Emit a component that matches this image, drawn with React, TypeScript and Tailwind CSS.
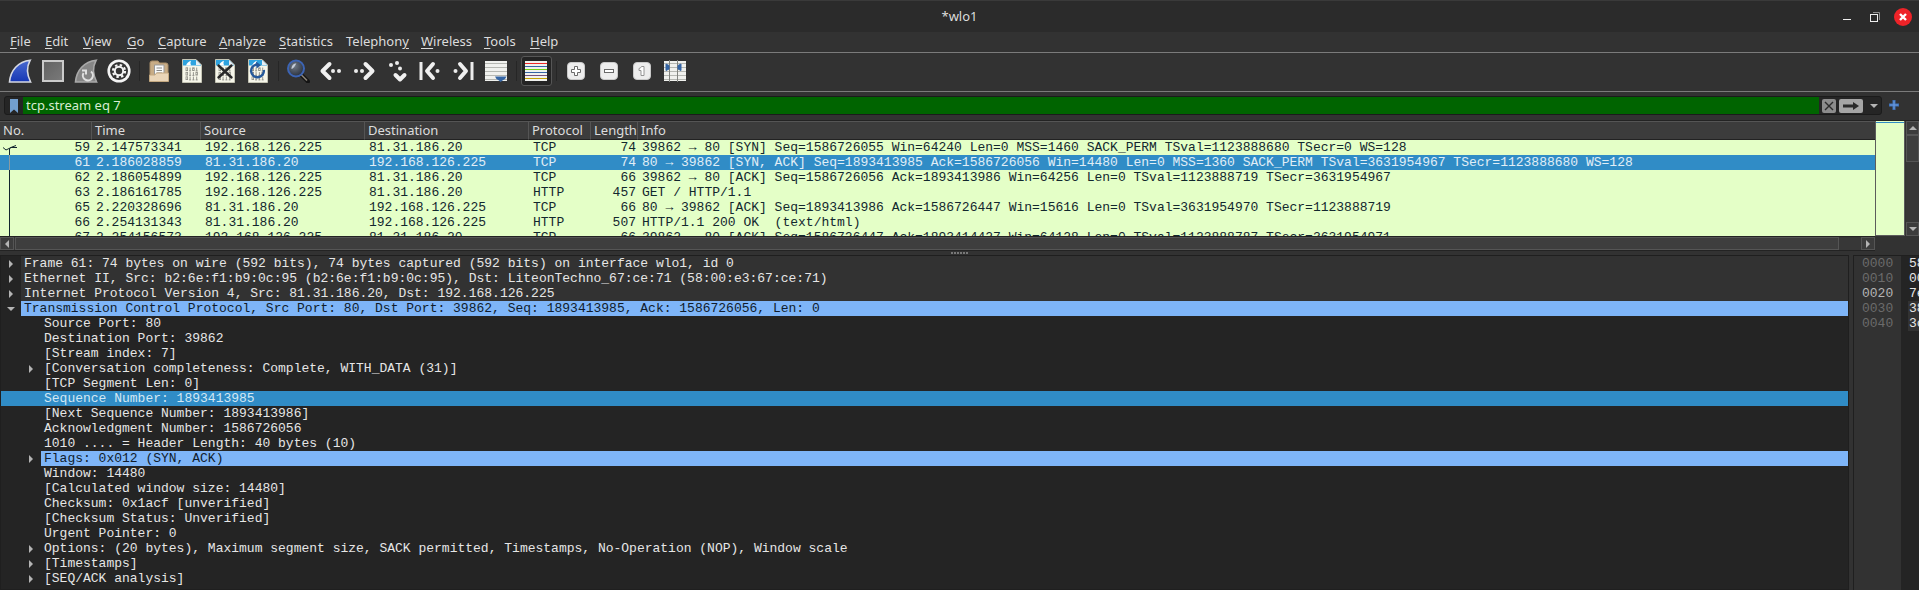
import React from "react";

const ui = "font-['Noto_Sans','Open_Sans',sans-serif]";
const mono = "font-['Liberation_Mono',monospace]";

type Packet = [string, string, string, string, string, string, string];
const A = "192.168.126.225";
const B = "81.31.186.20";
const packets: Packet[] = [
  ["59", "2.147573341", A, B, "TCP", "74", "39862 → 80 [SYN] Seq=1586726055 Win=64240 Len=0 MSS=1460 SACK_PERM TSval=1123888680 TSecr=0 WS=128"],
  ["61", "2.186028859", B, A, "TCP", "74", "80 → 39862 [SYN, ACK] Seq=1893413985 Ack=1586726056 Win=14480 Len=0 MSS=1360 SACK_PERM TSval=3631954967 TSecr=1123888680 WS=128"],
  ["62", "2.186054899", A, B, "TCP", "66", "39862 → 80 [ACK] Seq=1586726056 Ack=1893413986 Win=64256 Len=0 TSval=1123888719 TSecr=3631954967"],
  ["63", "2.186161785", A, B, "HTTP", "457", "GET / HTTP/1.1"],
  ["65", "2.220328696", B, A, "TCP", "66", "80 → 39862 [ACK] Seq=1893413986 Ack=1586726447 Win=15616 Len=0 TSval=3631954970 TSecr=1123888719"],
  ["66", "2.254131343", B, A, "HTTP", "507", "HTTP/1.1 200 OK  (text/html)"],
  ["67", "2.254156573", A, B, "TCP", "66", "39862 → 80 [ACK] Seq=1586726447 Ack=1893414427 Win=64128 Len=0 TSval=1123888787 TSecr=3631954971"],
];

type Detail = { text: string; depth: 0 | 1; arrow?: "right" | "down"; tone?: "proto" | "mark" | "sel" };
const details: Detail[] = [
  { text: "Frame 61: 74 bytes on wire (592 bits), 74 bytes captured (592 bits) on interface wlo1, id 0", depth: 0, arrow: "right", tone: "proto" },
  { text: "Ethernet II, Src: b2:6e:f1:b9:0c:95 (b2:6e:f1:b9:0c:95), Dst: LiteonTechno_67:ce:71 (58:00:e3:67:ce:71)", depth: 0, arrow: "right", tone: "proto" },
  { text: "Internet Protocol Version 4, Src: 81.31.186.20, Dst: 192.168.126.225", depth: 0, arrow: "right", tone: "proto" },
  { text: "Transmission Control Protocol, Src Port: 80, Dst Port: 39862, Seq: 1893413985, Ack: 1586726056, Len: 0", depth: 0, arrow: "down", tone: "mark" },
  { text: "Source Port: 80", depth: 1 },
  { text: "Destination Port: 39862", depth: 1 },
  { text: "[Stream index: 7]", depth: 1 },
  { text: "[Conversation completeness: Complete, WITH_DATA (31)]", depth: 1, arrow: "right" },
  { text: "[TCP Segment Len: 0]", depth: 1 },
  { text: "Sequence Number: 1893413985", depth: 1, tone: "sel" },
  { text: "[Next Sequence Number: 1893413986]", depth: 1 },
  { text: "Acknowledgment Number: 1586726056", depth: 1 },
  { text: "1010 .... = Header Length: 40 bytes (10)", depth: 1 },
  { text: "Flags: 0x012 (SYN, ACK)", depth: 1, arrow: "right", tone: "mark" },
  { text: "Window: 14480", depth: 1 },
  { text: "[Calculated window size: 14480]", depth: 1 },
  { text: "Checksum: 0x1acf [unverified]", depth: 1 },
  { text: "[Checksum Status: Unverified]", depth: 1 },
  { text: "Urgent Pointer: 0", depth: 1 },
  { text: "Options: (20 bytes), Maximum segment size, SACK permitted, Timestamps, No-Operation (NOP), Window scale", depth: 1, arrow: "right" },
  { text: "[Timestamps]", depth: 1, arrow: "right" },
  { text: "[SEQ/ACK analysis]", depth: 1, arrow: "right" },
];

/* Menu entries: text before the mnemonic, the mnemonic, text after it, width */
const menus: [string, string, string, string][] = [
  ["", "F", "ile", "w-[35px]"],
  ["", "E", "dit", "w-[38px]"],
  ["", "V", "iew", "w-11"],
  ["", "G", "o", "w-[31px]"],
  ["", "C", "apture", "w-[61px]"],
  ["", "A", "nalyze", "w-[60px]"],
  ["", "S", "tatistics", "w-[67px]"],
  ["Telephon", "y", "", "w-[75px]"],
  ["", "W", "ireless", "w-[63px]"],
  ["", "T", "ools", "w-[46px]"],
  ["", "H", "elp", "w-11"],
];

function Svg({ size = 24, children }: { size?: number; children: React.ReactNode }) {
  return (
    <svg width={size} height={size} viewBox={`0 0 ${size} ${size}`} aria-hidden="true">
      {children}
    </svg>
  );
}

function Fin({ fill, edge, inner }: { fill: string; edge: string; inner?: React.ReactNode }) {
  return (
    <Svg>
      <path d="M1.5 23 C2.5 11.5 10 2.5 22.2 1.2 C18.5 8 19 16 22.6 23 Z" fill={fill} stroke={edge} strokeWidth="1.6" />
      {inner}
    </Svg>
  );
}

function Sheet({ children }: { children?: React.ReactNode }) {
  const rows: [number, string][] = [[12, "0101"], [16.5, "0110"], [21, "0111"]];
  return (
    <Svg>
      <path d="M2.5 0.5H16L21.5 6V23.5H2.5Z" fill="#f6f6ea" stroke="#c5c5b5" />
      <path d="M3 1H16L21 6V6.5H3Z" fill="#2ea3df" />
      <path d="M6 6.5C7 4 8.5 2.5 11 1.8C10.3 3.5 10.3 5 11.2 6.5Z" fill="#fff" />
      <path d="M16 1V6H21Z" fill="#e8eef2" />
      {rows.map(([y, bits]) =>
        bits.split("").map((b, i) =>
          b === "0" ? (
            <rect key={`${y}${i}`} x={6 + i * 3.3} y={y - 3.2} width="1.6" height="2.8" fill="none" stroke="#8b8b84" strokeWidth="0.8" />
          ) : (
            <path key={`${y}${i}`} d={`M${6.8 + i * 3.3} ${y - 3.4}v3.3m-1 0h2`} stroke="#8b8b84" strokeWidth="0.9" />
          )
        )
      )}
      {children}
    </Svg>
  );
}

const dot = (x: number, y: number) => <circle key={`${x}-${y}`} cx={x} cy={y} r="2" fill="#ececec" />;
const chevron = { fill: "none", stroke: "#f0f0f0", strokeWidth: 4, strokeLinejoin: "round", strokeLinecap: "round" } as const;
const LINES = [3.5, 7.5, 11.5, 15.5, 19.5];

function KeyCap({ children }: { children: React.ReactNode }) {
  return (
    <Svg>
      <rect x="3.5" y="3.5" width="17" height="17" rx="3.5" fill="#ededed" stroke="#c9c9c9" />
      {children}
    </Svg>
  );
}

const icons: Record<string, React.ReactNode> = {
  start: <Fin fill="url(#finBlue)" edge="#d6d9e2" inner={
    <defs><linearGradient id="finBlue" x1="0" y1="0" x2="0" y2="1"><stop offset="0" stopColor="#4a6bd0" /><stop offset="1" stopColor="#1737b4" /></linearGradient></defs>
  } />,
  stop: (
    <Svg>
      <defs><linearGradient id="stopGrey" x1="0" y1="0" x2="1" y2="1"><stop offset="0" stopColor="#626262" /><stop offset="1" stopColor="#7a7a7a" /></linearGradient></defs>
      <rect x="2" y="2" width="20" height="20" fill="url(#stopGrey)" stroke="#cbcbcb" strokeWidth="2" />
    </Svg>
  ),
  restart: <Fin fill="#868686" edge="#a9a9a9" inner={
    <g fill="none" stroke="#e0e0e0" strokeWidth="2"><path d="M17 12.5a5 5 0 1 1 -7.5 1.5" /><path d="M8 11.5h4v4" /></g>
  } />,
  options: (
    <Svg>
      <circle cx="12" cy="12" r="11.6" fill="#f4f4f4" />
      <circle cx="12" cy="12" r="9" fill="#343434" />
      <circle cx="12" cy="12" r="4.2" fill="none" stroke="#f4f4f4" strokeWidth="2" />
      <circle cx="12" cy="12" r="6" fill="none" stroke="#f4f4f4" strokeWidth="2.2" strokeDasharray="2.4 2.31" />
    </Svg>
  ),
  open: (
    <Svg>
      <path d="M3 20V4q0-2 2-2h6l1.5 2H19q2 0 2 2v14Z" fill="#c8ac86" stroke="#a78c68" />
      <path d="M7.5 6h9.500v11h-9.500z" fill="#fafafa" stroke="#999" />
      <path d="M9.500 9h5.500M9.500 11.500h5.500M9.500 14h5.500" stroke="#888" />
      <path d="M2.500 16H8l1.500-2H21.500V22.500H2.500Z" fill="#ead5b8" stroke="#c4a981" />
    </Svg>
  ),
  save: <Sheet />,
  close: <Sheet><path d="M5.500 6.500L18.500 18.500M18.500 6.500L5.500 18.500" stroke="#282828" strokeWidth="2.4" strokeLinecap="round" /></Sheet>,
  reload: <Sheet><path d="M11 5.500A6.400 6.400 0 1 0 17.800 11" fill="none" stroke="#24589b" strokeWidth="2.400" /><path d="M10 2.500L15 6.200L10.500 9.500Z" fill="#24589b" /></Sheet>,
  find: (
    <Svg>
      <defs><radialGradient id="lens" cx="0.4" cy="0.35" r="0.7"><stop offset="0" stopColor="#6f7884" /><stop offset="1" stopColor="#252c3a" /></radialGradient></defs>
      <path d="M15.500 16L22 22.500" stroke="#141414" strokeWidth="4" strokeLinecap="round" />
      <path d="M15 15.500L21 21.500" stroke="#8a8378" strokeWidth="1.600" />
      <circle cx="10" cy="9.500" r="8" fill="url(#lens)" stroke="#3c64b4" strokeWidth="2" />
      <path d="M5.500 10C5.500 6.500 7.500 4.500 10.500 4.500C9 6 9 8.500 5.500 10Z" fill="#c4ccd8" />
    </Svg>
  ),
  back: <Svg><path d="M10.500 5L3.500 12L10.500 19" {...chevron} />{[dot(14, 12), dot(20, 12)]}</Svg>,
  forward: <Svg><path d="M13.500 5L20.500 12L13.500 19" {...chevron} />{[dot(4, 12), dot(10, 12)]}</Svg>,
  goto: <Svg><path d="M10.500 16L15 20.500L19.500 16" {...chevron} />{[dot(6, 6), dot(12, 4), dot(15, 9.500)]}</Svg>,
  first: <Svg><path d="M3 3V21" stroke="#ececec" strokeWidth="3" /><path d="M15 5L9 12L15 19" {...chevron} />{dot(19.500, 12)}</Svg>,
  last: <Svg><path d="M21 3V21" stroke="#ececec" strokeWidth="3" /><path d="M9 5L15 12L9 19" {...chevron} />{dot(4.500, 12)}</Svg>,
  scroll: (
    <Svg>
      <rect x="1" y="2" width="22" height="20" fill="#f0f1ee" />
      {LINES.map((y) => <path key={y} d={`M1 ${y + 1}H23`} stroke="#b5b7b2" />)}
      <path d="M11 17.500H22.500Q21.500 20.500 18.500 21.500L16.700 23L15 21.500Q12 20.500 11 17.500Z" fill="#3465a4" />
    </Svg>
  ),
  colorize: (
    <Svg>
      <rect x="1" y="2" width="22" height="20" fill="#f0f1ee" />
      {["#ef2929", "#3465a4", "#73d216", "#3465a4", "#75507b", "#c4a000"].map((c, i) => (
        <path key={i} d={`M1 ${4.5 + i * 3}H23`} stroke={c} />
      ))}
    </Svg>
  ),
  zoomIn: <KeyCap><path d="M10.500 7.500h3v3h3v3h-3v3h-3v-3h-3v-3h3z" fill="#fff" stroke="#6a6a6a" /></KeyCap>,
  zoomOut: <KeyCap><rect x="7.500" y="10.500" width="9" height="3" fill="#fff" stroke="#6a6a6a" /></KeyCap>,
  zoomReset: <KeyCap><path d="M11 16.500V11.500H9V9.500Q11 9 11.500 7.500H14V16.500Z" fill="#fff" stroke="#8a8a8a" strokeWidth="0.9" /></KeyCap>,
  columns: (
    <Svg>
      <rect x="1" y="2" width="22" height="20" fill="#f0f1ee" />
      {LINES.map((y) => <path key={y} d={`M1 ${y + 1}H23`} stroke="#b5b7b2" />)}
      <path d="M6.500 1V23M14.500 1V23" stroke="#81837f" />
      <path d="M3 5L6 6.500V10L3 11.500ZM18 5L15 6.500V10L18 11.500Z" fill="#3465a4" stroke="#3465a4" />
    </Svg>
  ),
};

const toolGroups: [string, string][][] = [
  [["start", "Start capture"], ["stop", "Stop capture"], ["restart", "Restart capture"], ["options", "Capture options"]],
  [["open", "Open file"], ["save", "Save file"], ["close", "Close file"], ["reload", "Reload file"]],
  [["find", "Find packet"], ["back", "Previous packet"], ["forward", "Next packet"], ["goto", "Go to packet"], ["first", "First packet"], ["last", "Last packet"], ["scroll", "Auto scroll"]],
  [["colorize", "Colorize"]],
  [["zoomIn", "Zoom in"], ["zoomOut", "Zoom out"], ["zoomReset", "Normal size"], ["columns", "Resize columns"]],
];

function Triangle({ dir, className = "" }: { dir: "left" | "right" | "up" | "down"; className?: string }) {
  const d = {
    left: "M6 0V8L2 4Z",
    right: "M2 0V8L6 4Z",
    up: "M0 6H8L4 2Z",
    down: "M0 2H8L4 6Z",
  }[dir];
  return (
    <svg width="8" height="8" viewBox="0 0 8 8" className={className} aria-hidden="true">
      <path d={d} fill="#b4b4b4" />
    </svg>
  );
}

function TitleBar() {
  return (
    <header className="grid h-8 grid-cols-[1fr_auto_1fr] items-center border-t border-[#3a3a3a] bg-[#2b2b2b]">
      <span />
      <h1 className="text-[13px] text-[#dcdcdc]">*wlo1</h1>
      <div className="flex items-center justify-end gap-[10px] pr-[7px]">
        <button aria-label="Minimize" className="flex size-[18px] items-center justify-center">
          <Svg size={18}><path d="M5 11.500H13" stroke="#eee" /></Svg>
        </button>
        <button aria-label="Restore" className="flex size-[18px] items-center justify-center">
          <Svg size={18}>
            <path d="M7 4.500H13.500V12" fill="none" stroke="#8f8f8f" />
            <rect x="4.500" y="6.500" width="7" height="7" fill="none" stroke="#eee" />
          </Svg>
        </button>
        <button aria-label="Close" className="flex size-[18px] items-center justify-center rounded-full bg-[#ee2328]">
          <Svg size={18}><path d="M6 6L12 12M12 6L6 12" stroke="#fff" strokeWidth="2.400" /></Svg>
        </button>
      </div>
    </header>
  );
}

function MenuBar() {
  return (
    <nav aria-label="Main menu" className="flex h-5 items-start bg-[#323232] pl-[10px] text-[13px] text-[#dcdcdc]">
      {menus.map(([a, key, b, w]) => (
        <button key={a + key + b} className={`${w} text-left leading-[18px] whitespace-nowrap`}>
          {a}<span className="underline underline-offset-2">{key}</span>{b}
        </button>
      ))}
    </nav>
  );
}

function ToolBar() {
  return (
    <div role="toolbar" aria-label="Main toolbar" className="flex h-10 items-center border-y border-[#7b7b7b] bg-[#323232] pb-[2px] pl-1">
      {toolGroups.map((group, g) => (
        <React.Fragment key={g}>
          {g > 0 && <span className="mx-[3px] h-5 w-px bg-[#262626]" />}
          {group.map(([id, label]) => (
            <button
              key={id}
              aria-label={label}
              className={`flex h-[30px] items-center rounded-[3px] ${id === "colorize" ? "mx-px w-[31px] border border-[#565656] bg-[#242424] pl-[2px]" : "w-[33px] pl-1"}`}
            >
              {icons[id]}
            </button>
          ))}
        </React.Fragment>
      ))}
    </div>
  );
}

function FilterBar() {
  return (
    <form className="flex h-7 items-start bg-[#323232] px-1 pt-1" onSubmit={(e) => e.preventDefault()}>
      <div className="flex h-[19px] grow items-center rounded-[3px] border border-[#1b1b1b] bg-[#252525]">
        <button type="button" aria-label="Bookmarks" className="flex w-[18px] justify-center">
          <svg width="8" height="14" viewBox="0 0 8 14" aria-hidden="true"><path d="M0 0H8V14L4 10.500L0 14Z" fill="#729fcf" /></svg>
        </button>
        <input
          aria-label="Display filter"
          defaultValue="tcp.stream eq 7"
          className="h-[17px] min-w-0 grow bg-[#006400] px-[3px] text-[13px] leading-[17px] text-[#d8ecd2] outline-none"
        />
        <button type="button" aria-label="Clear filter" className="ml-[3px] size-[14px] rounded-[2px] bg-[#8d8d8d]">
          <svg width="14" height="14" viewBox="0 0 14 14" aria-hidden="true"><path d="M3 3L11 11M11 3L3 11" stroke="#2c2c2c" strokeWidth="1.400" /></svg>
        </button>
        <button type="submit" aria-label="Apply filter" className="ml-[3px] h-[14px] w-6 rounded-[2px] bg-[#a5a5a5]">
          <svg width="24" height="14" viewBox="0 0 24 14" aria-hidden="true"><path d="M4 5.500H14V3L20 7L14 11V8.500H4Z" fill="#2a2a2a" /></svg>
        </button>
        <button type="button" aria-label="Filter history" className="flex w-[18px] justify-center pl-1"><Triangle dir="down" /></button>
      </div>
      <button type="button" aria-label="Add filter button" className="mt-[3px] mr-[15px] ml-[6px] size-3">
        <svg width="12" height="12" viewBox="0 0 12 12" aria-hidden="true"><path d="M6 1V11M1 6H11" stroke="#3f72b8" strokeWidth="3" /><path d="M6 2V10M2 6H10" stroke="#6c9be0" /></svg>
      </button>
    </form>
  );
}

const headers = ["No.", "Time", "Source", "Destination", "Protocol", "Length", "Info"];
const scrollBtn = "flex shrink-0 items-center justify-center border border-[#555] bg-[#3c3c3c]";

function PacketList() {
  return (
    <section aria-label="Packet list" className="flex border-t border-[#232323] bg-[#323232]">
      <div className="flex min-w-0 flex-1 flex-col">
        <div className="h-[115px] overflow-hidden bg-[#e4ffc7]">
          <table className={`w-full table-fixed border-separate border-spacing-0 ${mono} text-[13px] leading-[15px] text-[#12272e]`}>
            <colgroup>
              <col className="w-[92px]" /><col className="w-[109px]" /><col className="w-[164px]" /><col className="w-[164px]" />
              <col className="w-[62px]" /><col className="w-[47px]" /><col />
            </colgroup>
            <thead className={`${ui} bg-[#3c3c3c] text-[#dcdcdc]`}>
              <tr>
                {headers.map((h) => (
                  <th key={h} className="h-[19px] border-t border-r border-b border-t-[#555] border-r-[#555] border-b-[#222] p-0 pl-[3px] text-left leading-[17px] font-normal last:border-r-0">{h}</th>
                ))}
              </tr>
            </thead>
            <tbody>
              {packets.map((p, i) => (
                <tr key={p[0]} className={i === 1 ? "bg-[#308cc6] text-[#e0eef6]" : ""}>
                  {p.map((cell, c) => (
                    <td key={c} className={`h-[15px] overflow-hidden p-0 whitespace-pre ${c === 0 || c === 5 ? "pr-[2px] text-right" : "pl-1"}`}>
                      {c === 0 ? (
                        <div className="flex items-center justify-between">
                          <svg width="18" height="15" viewBox="0 0 18 15" aria-hidden="true">
                            {i === 0 ? (
                              <path d="M9.500 15V8.500L11 7.500H17M3 7.500L6 10L8 9L12 7L16 5.500" fill="none" stroke="#12272e" />
                            ) : (
                              <path d="M9.500 0V15" stroke={i === 1 ? "#8a9aa0" : "#12272e"} />
                            )}
                          </svg>
                          <span>{cell}</span>
                        </div>
                      ) : cell}
                    </td>
                  ))}
                </tr>
              ))}
            </tbody>
          </table>
        </div>
        <div className="flex h-[15px] border-y border-[#232323] bg-[#373737]">
          <button aria-label="Scroll left" className={`${scrollBtn} w-[14px]`}><Triangle dir="left" /></button>
          <div className="mr-[22px] ml-px grow border border-[#555] bg-[#3e3e3e]" />
          <button aria-label="Scroll right" className={`${scrollBtn} w-[14px]`}><Triangle dir="right" /></button>
        </div>
      </div>
      <div className="w-[30px] shrink-0">
        <div className="h-[115px] border-x border-b border-[#5c5c5c] bg-[#e4ffc7] pt-px"><div className="h-px bg-[#308cc6]" /></div>
      </div>
      <div className="flex w-[14px] shrink-0 flex-col pl-px">
        <button aria-label="Scroll up" className={`${scrollBtn} h-[14px]`}><Triangle dir="up" /></button>
        <div className="h-[27px] border border-[#555] bg-[#3e3e3e]" />
        <div className="h-[60px] bg-[#373737]" />
        <button aria-label="Scroll down" className={`${scrollBtn} h-[14px]`}><Triangle dir="down" /></button>
      </div>
    </section>
  );
}

const tones = {
  proto: "bg-[#323232]",
  mark: "bg-[#7eb5f8] text-[#101c2c]",
  sel: "bg-[#308cc6] text-[#d3e8f4]",
};

function DetailPane() {
  return (
    <ul aria-label="Packet details" className="min-w-0 grow overflow-hidden border border-[#1f1f1f] bg-[#242424]">
      {details.map((d) => (
        <li key={d.text} className={`flex h-[15px] ${d.tone === "sel" ? tones.sel : ""}`}>
          <span className={`flex shrink-0 items-center ${d.depth ? "w-10 pl-[26px]" : "w-5 pl-[6px]"}`}>
            {d.arrow && (
              <button aria-label="Toggle" className="flex"><Triangle dir={d.arrow} /></button>
            )}
          </span>
          <span className={`grow pl-[3px] whitespace-pre ${d.tone ? tones[d.tone] : ""}`}>{d.text}</span>
        </li>
      ))}
    </ul>
  );
}

const hexRows: [string, string][] = [["0000", "58"], ["0010", "00"], ["0020", "7e"], ["0030", "38"], ["0040", "3c"]];

function BytesPane() {
  return (
    <div aria-label="Packet bytes" className="w-[66px] shrink-0 overflow-hidden border-t border-l border-[#1f1f1f] bg-[linear-gradient(to_right,#323232_47px,#242424_47px)]">
      {hexRows.map(([offset, byte]) => (
        <div key={offset} className="flex h-[15px] whitespace-pre">
          <span className={`w-[54px] shrink-0 pl-2 ${offset === "0020" ? "text-[#b4b4b4]" : "text-[#6b6b6b]"}`}>{offset}</span>
          <span className={`pl-px ${offset === "0030" || offset === "0040" ? "bg-[#323232]" : ""}`}>{byte}</span>
        </div>
      ))}
    </div>
  );
}

export default function App() {
  return (
    <div className={`flex min-h-screen flex-col overflow-hidden bg-[#323232] ${ui}`}>
      <TitleBar />
      <MenuBar />
      <ToolBar />
      <FilterBar />
      <PacketList />
      <div className="flex h-[4px] items-center justify-center gap-px">
        {[0, 1, 2, 3, 4, 5].map((n) => <span key={n} className="size-[2px] bg-[#777]" />)}
      </div>
      <main className={`flex grow gap-[4px] ${mono} text-[13px] leading-[15px] text-[#e6e6e6]`}>
        <DetailPane />
        <BytesPane />
      </main>
    </div>
  );
}
